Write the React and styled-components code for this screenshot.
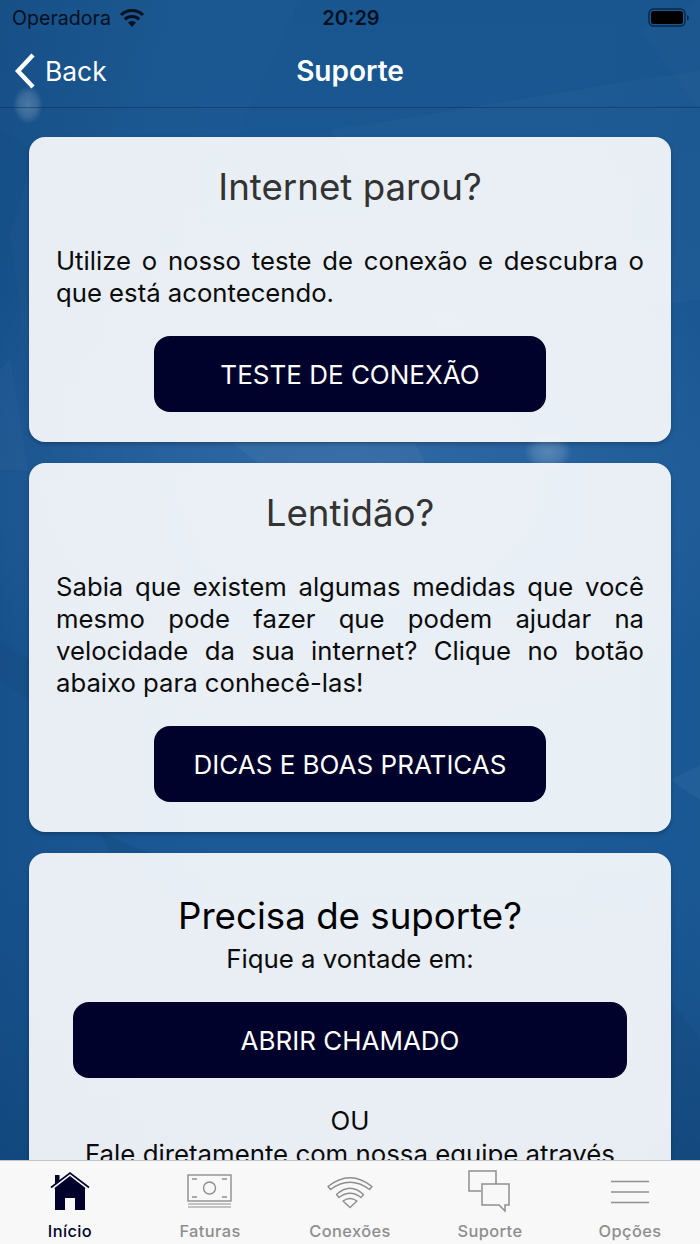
import React from 'react'
import styled, { createGlobalStyle } from 'styled-components'

const GlobalStyle = createGlobalStyle`
    html, body {
        margin: 0;
        padding: 0;
    }
    body {
        font-family: Inter, "Liberation Sans", sans-serif;
    }
`

const Screen = styled.div`
    position: relative;
    width: 700px;
    height: 1244px;
    overflow: hidden;
    display: flex;
    flex-direction: column;
    background:
        radial-gradient(ellipse 420px 300px at 350px 470px, rgba(70, 120, 180, 0.5), transparent),
        linear-gradient(90deg, rgba(8, 50, 100, 0.22) 0%, transparent 30%, transparent 80%, rgba(8, 50, 100, 0.05) 100%),
        linear-gradient(180deg, #195690 0%, #1c5b98 40%, #1b5a97 70%, #134b80 100%);
`

const Backdrop = styled.svg`
    position: absolute;
    inset: 0;
    width: 700px;
    height: 1244px;
`

const Header = styled.header`
    position: relative;
    height: 108px;
    flex-shrink: 0;
    box-sizing: border-box;
    border-bottom: 1px solid rgba(10, 40, 80, 0.45);
    display: flex;
    flex-direction: column;
`

const StatusBar = styled.div`
    height: 36px;
    display: flex;
    align-items: center;
    justify-content: space-between;
    padding: 0 10px 0 12px;
    color: #06101f;
`

const Carrier = styled.div`
    width: 220px;
    display: flex;
    align-items: center;
    gap: 8px;
    font-size: 19.6px;
`

const Clock = styled.div`
    font-size: 20px;
    font-weight: 600;
`

const BatterySlot = styled.div`
    width: 220px;
    display: flex;
    justify-content: flex-end;
`

const NavBar = styled.nav`
    flex: 1;
    display: flex;
    align-items: center;
    justify-content: space-between;
    padding: 0 14px 2px;
    color: #fff;
`

const BackLink = styled.div`
    width: 150px;
    display: flex;
    align-items: center;
    gap: 9px;
    font-size: 26.4px;
`

const NavTitle = styled.div`
    font-size: 28px;
    font-weight: 600;
`

const NavSpacer = styled.div`
    width: 150px;
`

const Content = styled.main`
    position: relative;
    flex: 1;
    min-height: 0;
    overflow: hidden;
    display: flex;
    flex-direction: column;
    gap: 21px;
    padding: 29px 29px 0;
`

const Card = styled.section`
    flex-shrink: 0;
    background: rgba(255, 255, 255, 0.9);
    border-radius: 16px;
    box-shadow: 0 2px 4px rgba(0, 0, 0, 0.25);
    box-sizing: border-box;
    padding: ${(p) => p.$padding};
    display: flex;
    flex-direction: column;
    align-items: center;
`

const CardTitle = styled.h2`
    margin: 0;
    font-size: 36.7px;
    font-weight: 400;
    line-height: 44px;
    color: ${(p) => (p.$dark ? '#000' : '#333')};
`

const Body = styled.p`
    align-self: stretch;
    margin: ${(p) => p.$margin || '0'};
    font-size: 25.7px;
    line-height: 32.3px;
    color: #0b0b0b;
    text-align: justify;
`

const Centered = styled.p`
    margin: ${(p) => p.$margin || '0'};
    font-size: 25.8px;
    line-height: 33px;
    color: #0b0b0b;
    text-align: center;
    white-space: nowrap;
`

const ActionButton = styled.button`
    width: ${(p) => p.$width};
    height: 76px;
    flex-shrink: 0;
    margin-top: ${(p) => p.$top};
    border: 0;
    border-radius: 16px;
    background: #00022b;
    color: #fff;
    font-family: inherit;
    font-size: 26px;
    padding: 2px 0 0;
`

const TabBar = styled.footer`
    position: relative;
    height: 84px;
    flex-shrink: 0;
    box-sizing: border-box;
    border-top: 1px solid #c4c6cb;
    background: #f8f8f8;
    display: grid;
    grid-template-columns: repeat(5, 140px);
`

const Tab = styled.div`
    display: flex;
    flex-direction: column;
    align-items: center;
    color: ${(p) => (p.$active ? '#00022b' : '#8e8e8e')};
`

const TabIcon = styled.div`
    height: 60px;
    box-sizing: content-box;
    margin-top: 1px;
    margin-bottom: -1px;
    display: flex;
    align-items: center;
    justify-content: center;
`

const TabLabel = styled.span`
    font-size: 16.4px;
    font-weight: 500;
    letter-spacing: 0.4px;
`

const polygons = [
    ['0,0 300,0 190,240 0,130', '#fff', 0.012],
    ['330,130 700,70 700,300 440,330', '#fff', 0.02],
    ['640,30 700,0 700,110', '#fff', 0.015],
    ['0,370 10,360 28,470 0,470', '#fff', 0.025],
    ['10,235 29,170 29,370', '#fff', 0.015],
    ['671,780 700,765 700,800', '#fff', 0.04],
    ['0,640 29,660 29,700 0,680', '#000', 0.04],
    ['671,1000 700,1040 700,1160 671,1160', '#000', 0.04],
    ['100,832 150,853 110,853', '#000', 0.05],
]

const WifiGlyph = () => (
    <svg width="26" height="20" viewBox="0 0 26 20">
        <path d="M13 19 L9 14.6 A6 6 0 0 1 17 14.6 Z" fill="#06101f" />
        <path d="M5.8 11.3 A10.5 10.5 0 0 1 20.2 11.3" fill="none" stroke="#06101f" strokeWidth="3" />
        <path d="M2 7 A16 16 0 0 1 24 7" fill="none" stroke="#06101f" strokeWidth="3" />
    </svg>
)

const BatteryGlyph = () => (
    <svg width="42" height="20" viewBox="0 0 42 20">
        <rect x="1" y="1" width="36" height="17" rx="4.5" fill="none" stroke="#0a2748" strokeWidth="1.4" />
        <rect x="3" y="3" width="32" height="13" rx="2.5" fill="#000" />
        <path d="M39 7 a3 3 0 0 1 0 5.5 z" fill="#0a2748" />
    </svg>
)

const BackChevron = () => (
    <svg width="22" height="36" viewBox="0 0 22 36">
        <path d="M19 2 L4 18 L19 34" fill="none" stroke="#fff" strokeWidth="4.4" />
    </svg>
)

const HomeIcon = () => (
    <svg width="40" height="40" viewBox="0 0 40 40">
        <path d="M1 15.5 L20 1 L39 15.5" fill="none" stroke="#00022b" strokeWidth="1.6" />
        <path d="M4.5 16 L20 4 L35.5 16 L35 17 V38 H25 V26 H15 V38 H5 V17 Z M5 3 H9.5 V8.5 L5 12 Z" fill="#00022b" />
    </svg>
)

const BillIcon = () => (
    <svg width="46" height="36" viewBox="0 0 46 36" fill="none" stroke="#8e8e8e">
        <rect x="1" y="1" width="43" height="26" strokeWidth="1.4" />
        <circle cx="22.5" cy="14" r="6" strokeWidth="1.4" />
        <path d="M5 5 H10 M35 5 H40 M5 23 H10 M35 23 H40" strokeWidth="1.4" />
        <path d="M1 30 H44 M1 33 H44" strokeWidth="1.2" />
    </svg>
)

const SignalIcon = () => (
    <svg width="46" height="34" viewBox="0 0 46 34" fill="none" stroke="#8e8e8e" strokeWidth="1.4" strokeLinejoin="round">
        <path d="M1 11.5 Q23 -6 45 11.5 L42.5 14.5 Q23 0 3.5 14.5 Z" />
        <path d="M9.5 19.5 Q23 7 36.5 19.5 L34 22.5 Q23 14 12 22.5 Z" />
        <path d="M23 32.5 L16 26 Q23 21 30 26 Z" />
    </svg>
)

const ChatIcon = () => (
    <svg width="44" height="44" viewBox="0 0 44 44" fill="none" stroke="#8e8e8e" strokeWidth="1.5">
        <path d="M13 21 H1 V1 H28 V14" />
        <path d="M14 14 H41 V35 H37 V41 L31 35 H14 Z" />
    </svg>
)

const MenuIcon = () => (
    <svg width="40" height="24" viewBox="0 0 40 24" stroke="#8e8e8e" strokeWidth="1.5">
        <path d="M1 1.5 H39 M1 12 H39 M1 22.5 H39" />
    </svg>
)

const tabs = [
    { label: 'Início', icon: <HomeIcon />, active: true },
    { label: 'Faturas', icon: <BillIcon /> },
    { label: 'Conexões', icon: <SignalIcon /> },
    { label: 'Suporte', icon: <ChatIcon /> },
    { label: 'Opções', icon: <MenuIcon /> },
]

const App = () => {
    return (
        <Screen>
            <GlobalStyle />
            <Backdrop viewBox="0 0 700 1244">
                <defs>
                    <radialGradient id="glow">
                        <stop offset="0%" stopColor="#fff" stopOpacity="0.22" />
                        <stop offset="60%" stopColor="#fff" stopOpacity="0.14" />
                        <stop offset="100%" stopColor="#fff" stopOpacity="0" />
                    </radialGradient>
                </defs>
                {polygons.map(([points, fill, opacity]) => (
                    <polygon key={points} points={points} fill={fill} opacity={opacity} />
                ))}
                <polygon points="232,443 415,443 425,463 258,463" fill="#fff" opacity="0.04" />
                <ellipse cx="28" cy="105" rx="15" ry="19" fill="url(#glow)" />
                <ellipse cx="548" cy="452" rx="24" ry="18" fill="url(#glow)" />
            </Backdrop>
            <Header>
                <StatusBar>
                    <Carrier>
                        Operadora
                        <WifiGlyph />
                    </Carrier>
                    <Clock>20:29</Clock>
                    <BatterySlot>
                        <BatteryGlyph />
                    </BatterySlot>
                </StatusBar>
                <NavBar>
                    <BackLink>
                        <BackChevron />
                        Back
                    </BackLink>
                    <NavTitle>Suporte</NavTitle>
                    <NavSpacer />
                </NavBar>
            </Header>
            <Content>
                <Card $padding="28px 27px 30px">
                    <CardTitle>Internet parou?</CardTitle>
                    <Body $margin="36px 0 0">
                        Utilize o nosso teste de conexão e descubra o que está acontecendo.
                    </Body>
                    <ActionButton $width="392px" $top="26px">TESTE DE CONEXÃO</ActionButton>
                </Card>
                <Card $padding="28px 27px 30px">
                    <CardTitle>Lentidão?</CardTitle>
                    <Body $margin="36px 0 0">
                        Sabia que existem algumas medidas que você mesmo pode fazer que podem ajudar na velocidade da sua internet? Clique no botão abaixo para conhecê-las!
                    </Body>
                    <ActionButton $width="392px" $top="26px">DICAS E BOAS PRATICAS</ActionButton>
                </Card>
                <Card $padding="41px 27px 30px">
                    <CardTitle $dark>Precisa de suporte?</CardTitle>
                    <Centered $margin="4px 0 0">Fique a vontade em:</Centered>
                    <ActionButton $width="554px" $top="27px">ABRIR CHAMADO</ActionButton>
                    <Centered $margin="26px 0 0">OU</Centered>
                    <Centered>Fale diretamente com nossa equipe através</Centered>
                </Card>
            </Content>
            <TabBar>
                {tabs.map((tab) => (
                    <Tab key={tab.label} $active={tab.active}>
                        <TabIcon>{tab.icon}</TabIcon>
                        <TabLabel>{tab.label}</TabLabel>
                    </Tab>
                ))}
            </TabBar>
        </Screen>
    )
}

export default App
